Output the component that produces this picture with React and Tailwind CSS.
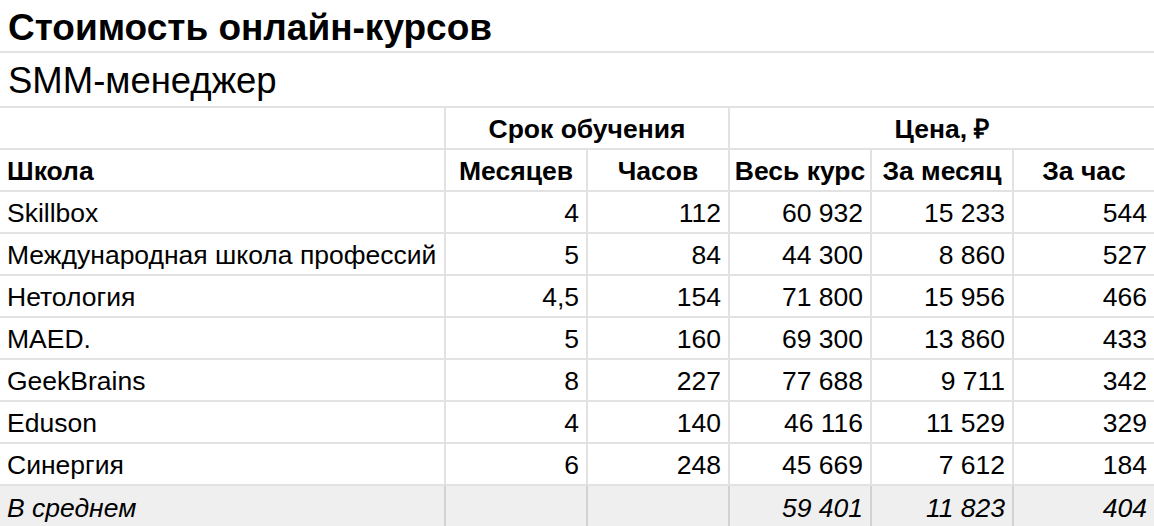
import React from 'react';

const rows = [
  ['Skillbox', '4', '112', '60 932', '15 233', '544'],
  ['Международная школа профессий', '5', '84', '44 300', '8 860', '527'],
  ['Нетология', '4,5', '154', '71 800', '15 956', '466'],
  ['MAED.', '5', '160', '69 300', '13 860', '433'],
  ['GeekBrains', '8', '227', '77 688', '9 711', '342'],
  ['Eduson', '4', '140', '46 116', '11 529', '329'],
  ['Синергия', '6', '248', '45 669', '7 612', '184'],
];

const widths = ['w-[446px]', 'w-[142px]', 'w-[142px]', 'w-[142px]', 'w-[142px]', 'w-[140px]'];

const Row = ({ cells, className = '', cellClass = '', align }) => (
  <div className={`flex h-[42px] border-b-2 border-[#e2e2e2] ${className}`}>
    {cells.map((c, i) => (
      <div
        key={i}
        className={`${widths[i]} shrink-0 flex items-center px-[7px] pt-[2px] whitespace-nowrap ${
          i < 5 ? 'border-r-2' : ''
        } ${cellClass} ${align ? align(i) : i === 0 ? 'justify-start' : 'justify-end'}`}
      >
        {c}
      </div>
    ))}
  </div>
);

export default function App() {
  return (
    <div className="w-[1154px] h-[526px] overflow-hidden bg-white text-black font-['Liberation_Sans',Arial,sans-serif] text-[26.5px] leading-none">
      <div className="h-[53px] border-b-2 border-[#e2e2e2] flex items-center pl-[8px] pt-[4px]">
        <h1 className="text-[37px] font-bold">Стоимость онлайн-курсов</h1>
      </div>
      <div className="h-[55px] border-b-2 border-[#e2e2e2] flex items-center pl-[8px] pt-[4px]">
        <h2 className="text-[36.5px]">SMM-менеджер</h2>
      </div>
      <div className="flex h-[42px] border-b-2 border-[#e2e2e2] font-bold">
        <div className="w-[446px] shrink-0 border-r-2 border-[#e2e2e2]" />
        <div className="w-[284px] shrink-0 border-r-2 border-[#e2e2e2] flex items-center justify-center pt-[2px]">
          Срок обучения
        </div>
        <div className="w-[424px] shrink-0 flex items-center justify-center pt-[2px]">Цена, ₽</div>
      </div>
      <Row
        cells={['Школа', 'Месяцев', 'Часов', 'Весь курс', 'За месяц', 'За час']}
        cellClass="font-bold border-[#e2e2e2]"
        align={(i) => (i === 0 ? 'justify-start' : 'justify-center')}
      />
      {rows.map((r) => (
        <Row key={r[0]} cells={r} cellClass="border-[#e2e2e2]" />
      ))}
      <div className="flex h-[42px] bg-[#efefef] italic">
        {['В среднем', '', '', '59 401', '11 823', '404'].map((c, i) => (
          <div
            key={i}
            className={`${widths[i]} shrink-0 flex items-center px-[7px] pt-[2px] whitespace-nowrap ${
              i < 5 ? 'border-r-2 border-[#d2d2d2]' : ''
            } ${i === 0 ? 'justify-start' : 'justify-end'}`}
          >
            {c}
          </div>
        ))}
      </div>
    </div>
  );
}
